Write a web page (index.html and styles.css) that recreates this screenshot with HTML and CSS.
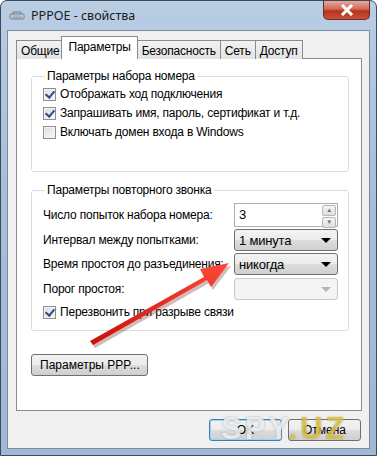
FILE: index.html
```html
<!DOCTYPE html>
<html lang="ru">
<head>
  <meta charset="UTF-8">
  <title>PPPOE - свойства</title>
  <link rel="stylesheet" href="styles.css">
</head>
<body>
  <div class="window">
    <div class="titlebar">
      <svg class="title-icon" width="16" height="12" viewBox="0 0 16 12">
        <rect x="1" y="4" width="14" height="5" rx="1" fill="#c9d3dc" stroke="#6f7d8a"/>
        <path d="M3 6h10M3 7.5h10" stroke="#8c99a5" stroke-width="0.8"/>
        <path d="M4 4V2h8v2" fill="none" stroke="#6f7d8a"/>
      </svg>
      <span class="title">PPPOE - свойства</span>
      <button class="close">
        <svg width="14" height="12" viewBox="0 0 14 12"><path d="M2 1l10 10M12 1L2 11" stroke="#fff" stroke-width="3"/></svg>
      </button>
    </div>

    <div class="client">
      <div class="tabs">
        <div class="tab">Общие</div>
        <div class="tab active">Параметры</div>
        <div class="tab">Безопасность</div>
        <div class="tab">Сеть</div>
        <div class="tab">Доступ</div>
      </div>

      <div class="panel">
        <fieldset class="group group-dial">
          <legend>Параметры набора номера</legend>
          <label class="check"><span class="box checked"></span>Отображать ход подключения</label>
          <label class="check"><span class="box checked"></span>Запрашивать имя, пароль, сертификат и т.д.</label>
          <label class="check"><span class="box"></span>Включать домен входа в Windows</label>
        </fieldset>

        <fieldset class="group group-redial">
          <legend>Параметры повторного звонка</legend>
          <div class="field">
            <span>Число попыток набора номера:</span>
            <div class="spin">3<span class="spin-btns"><i>▲</i><i>▼</i></span></div>
          </div>
          <div class="field">
            <span>Интервал между попытками:</span>
            <div class="combo">1 минута<b></b></div>
          </div>
          <div class="field">
            <span>Время простоя до разъединения:</span>
            <div class="combo">никогда<b></b></div>
          </div>
          <div class="field">
            <span>Порог простоя:</span>
            <div class="combo disabled"><b></b></div>
          </div>
          <label class="check"><span class="box checked"></span>Перезвонить при разрыве связи</label>
        </fieldset>

        <button class="btn ppp">Параметры PPP...</button>
      </div>

      <div class="actions">
        <button class="btn ok">OK</button>
        <button class="btn">Отмена</button>
      </div>
    </div>

    <!-- стрелка поверх окна -->
    <svg class="arrow" width="377" height="456" viewBox="0 0 377 456">
      <defs>
        <linearGradient id="red" x1="0" y1="0" x2="0" y2="1">
          <stop offset="0" stop-color="#ff4a3a"/>
          <stop offset="1" stop-color="#c8100a"/>
        </linearGradient>
      </defs>
      <path d="M89 340 L203 276 L199 268 L228 262 L210 286 L206 279 L92 344 Z" fill="#7a3a30" opacity=".35" transform="translate(2 3)"/>
      <path d="M89 340 L203 276 L199 268 L228 262 L210 286 L206 279 L92 344 Z" fill="url(#red)"/>
    </svg>

    <div class="watermark">SPY<span>.UZ</span></div>
  </div>
</body>
</html>
```

FILE: styles.css
```css
* { box-sizing: border-box; }
body {
  margin: 0;
  background: #fff;
  font-family: 'Liberation Sans', Arial, sans-serif;
  font-size: 12px;
  color: #000;
}

.window {
  position: relative;
  width: 377px; height: 456px;
  background: linear-gradient(180deg, #b9cde3 0%, #a7bfd9 40%, #9fb8d4 100%);
  border: 1px solid #3b4a5c;
  border-radius: 7px 7px 0 0;
  overflow: hidden;
}

/* заголовок */
.titlebar {
  height: 29px;
  display: flex; align-items: center;
  padding-left: 8px;
}
.title-icon { margin-right: 6px; }
.title { font-family: 'Noto Sans', sans-serif; font-size: 12.5px; color: #1b1b1b; }
.close {
  margin-left: auto; align-self: flex-start;
  width: 47px; height: 19px; margin-right: 6px;
  border: 1px solid #6b2b22; border-top: none;
  border-radius: 0 0 5px 5px;
  background: linear-gradient(180deg, #e6a89b 0%, #d26a55 45%, #b8321c 55%, #c9503a 100%);
  display: flex; align-items: center; justify-content: center;
  padding: 0;
}

/* клиентская область */
.client {
  margin: 0 6px 0 6px;
  height: 419px;
  background: #f0f0f0;
  border: 1px solid #7b8a9c;
  padding: 5px 8px 0 8px;
}

.tabs { display: flex; align-items: flex-end; height: 23px; position: relative; z-index: 1; }
.tab {
  height: 19px; padding: 3px 4px 0;
  border: 1px solid #898c95; border-bottom: none;
  margin-right: -1px;
  background: linear-gradient(180deg, #f2f2f2, #e3e3e3);
  color: #000;
  white-space: nowrap;
  letter-spacing: -0.2px;
}
.tab.active {
  height: 23px; padding: 3px 6px 0;
  background: #fff;
  margin: 0 -1px 0 -2px;
  position: relative; z-index: 2;
}

.panel {
  width: 346px; height: 353px;
  margin-top: -1px;
  background: #fff;
  border: 1px solid #898c95;
  padding: 10px 12px 0 14px;
  display: flex; flex-direction: column;
  letter-spacing: -0.2px;
}

.group {
  margin: 0; padding: 3px 10px 0 11px;
  border: 1px solid #d5dfe5; border-radius: 3px;
  display: flex; flex-direction: column;
}
.group legend { padding: 0 2px; margin-left: 2px; }
.group-dial { height: 103px; gap: 3px; }
.group-redial { height: 148px; margin-top: 11px; padding-top: 6px; }

.check { display: flex; align-items: center; height: 16px; white-space: nowrap; }
.box {
  width: 13px; height: 13px; margin-right: 4px; flex: none;
  border: 1px solid #8e8f8f;
  background: linear-gradient(135deg, #dcdcdc, #fafafa);
  box-shadow: inset 0 0 0 1px #f4f4f4;
  position: relative;
}
.box.checked::after {
  content: '';
  position: absolute; left: 3px; top: 0px;
  width: 4px; height: 7px;
  border: solid #2a4f8d; border-width: 0 2px 2px 0;
  transform: rotate(40deg);
}

.field {
  display: flex; align-items: center; justify-content: space-between;
  height: 24.5px; white-space: nowrap;
}
.spin {
  width: 104px; height: 24px;
  border: 1px solid #abadb3; background: #fff;
  padding: 3px 0 0 4px; font-size: 13px;
  display: flex; justify-content: space-between;
}
.spin-btns {
  width: 15px; display: flex; flex-direction: column; gap: 1px;
  padding: 0 1px 1px 0; margin-top: -2px;
}
.spin-btns i {
  flex: 1; font-style: normal; font-size: 6px; line-height: 9px;
  text-align: center; color: #6d6d6d;
  border: 1px solid #b7b7b7; border-radius: 2px;
  background: linear-gradient(180deg, #f6f6f6, #dedede);
}
.combo {
  width: 104px; height: 22px;
  border: 1px solid #707070; border-radius: 3px;
  background: linear-gradient(180deg, #f3f3f3 0%, #ebebeb 50%, #dddddd 51%, #cfcfcf 100%);
  padding: 3px 0 0 4px; font-size: 13px;
  position: relative;
}
.combo b {
  position: absolute; right: 6px; top: 8px;
  border: 5px solid transparent; border-top: 5px solid #000;
  border-bottom: none;
}
.combo.disabled {
  border-color: #c9c9c9;
  background: #f4f4f4;
}
.combo.disabled b { border-top-color: #b5b5b5; }
.group-redial .check { margin-top: 3px; }

.btn {
  font: inherit; color: #000;
  height: 22px;
  border: 1px solid #707070; border-radius: 3px;
  background: linear-gradient(180deg, #f2f2f2 0%, #ebebeb 50%, #dddddd 51%, #cfcfcf 100%);
  padding: 0 8px;
  white-space: nowrap;
}
.ppp { width: 117px; margin-top: 23px; }

.actions {
  display: flex; justify-content: flex-end; gap: 6px;
  margin-top: 8px;
}
.actions .btn { width: 73px; }
.ok { border-color: #3c7fb1; box-shadow: inset 0 0 0 1px #9bd5f4; }

.arrow { position: absolute; left: 0; top: 0; pointer-events: none; }

.watermark {
  position: absolute; left: 220px; top: 410px;
  font-family: 'Liberation Sans', sans-serif; font-weight: bold; font-size: 31px;
  letter-spacing: 3px;
  color: rgba(255,255,255,.75);
  text-shadow: 0 0 2px rgba(110,120,130,.6);
  pointer-events: none;
}
.watermark span { color: rgba(240,205,40,.7); }
```
